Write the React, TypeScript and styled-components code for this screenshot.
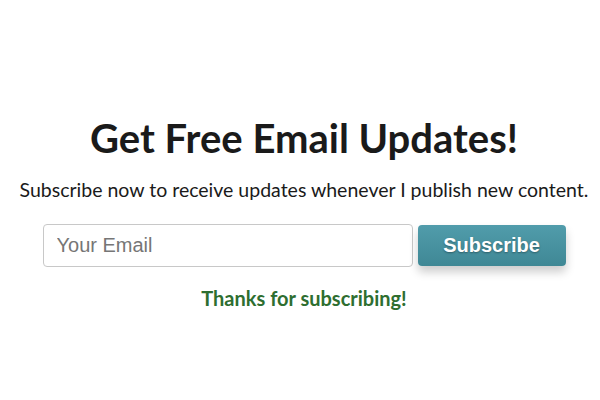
import React from "react";
import styled, { createGlobalStyle } from "styled-components";

const Global = createGlobalStyle`
  html, body { margin: 0; padding: 0; background: #ffffff; }
  body { font-family: Lato, "Open Sans", sans-serif; }
  * { box-sizing: border-box; }
`;

const Page = styled.main`
  width: 600px;
  height: 400px;
  padding: 114px 0 0 8px;
  display: flex;
  flex-direction: column;
  align-items: center;
`;

const Title = styled.h1`
  margin: 0;
  font-family: Lato, sans-serif;
  font-weight: 700;
  font-size: 40px;
  line-height: 48px;
  color: #1a1a1a;
`;

const Lead = styled.p`
  margin: 16px 0 0;
  font-family: Lato, sans-serif;
  font-size: 19.5px;
  line-height: 24px;
  color: #1a1a1a;
  white-space: nowrap;
`;

const Form = styled.form`
  margin-top: 22px;
  display: flex;
  gap: 5px;
  align-items: center;
`;

const EmailInput = styled.input`
  width: 370px;
  height: 43px;
  padding: 0 13px;
  border: 1px solid #c8c8c8;
  border-radius: 4px;
  font-family: "Liberation Sans", Arial, sans-serif;
  font-size: 20px;
  color: #333;
  outline: none;
  &::placeholder { color: #767676; }
`;

const SubmitButton = styled.button`
  width: 148px;
  height: 41px;
  border: none;
  border-radius: 4px;
  background: linear-gradient(#519cab, #3f8895);
  color: #ffffff;
  font-family: "Liberation Sans", Arial, sans-serif;
  font-weight: 700;
  font-size: 20px;
  text-shadow: 0 1px 2px rgba(0, 0, 0, 0.35);
  box-shadow: 0 6px 10px rgba(0, 0, 0, 0.2);
  cursor: pointer;
`;

const Thanks = styled.p`
  margin: 19px 0 0;
  font-family: Lato, sans-serif;
  font-weight: 700;
  font-size: 20px;
  line-height: 24px;
  color: #2e6e30;
`;

export default function App() {
  return (
    <>
      <Global />
      <Page>
        <Title>Get Free Email Updates!</Title>
        <Lead>Subscribe now to receive updates whenever I publish new content.</Lead>
        <Form onSubmit={(e) => e.preventDefault()}>
          <EmailInput type="email" placeholder="Your Email" />
          <SubmitButton type="submit">Subscribe</SubmitButton>
        </Form>
        <Thanks>Thanks for subscribing!</Thanks>
      </Page>
    </>
  );
}
